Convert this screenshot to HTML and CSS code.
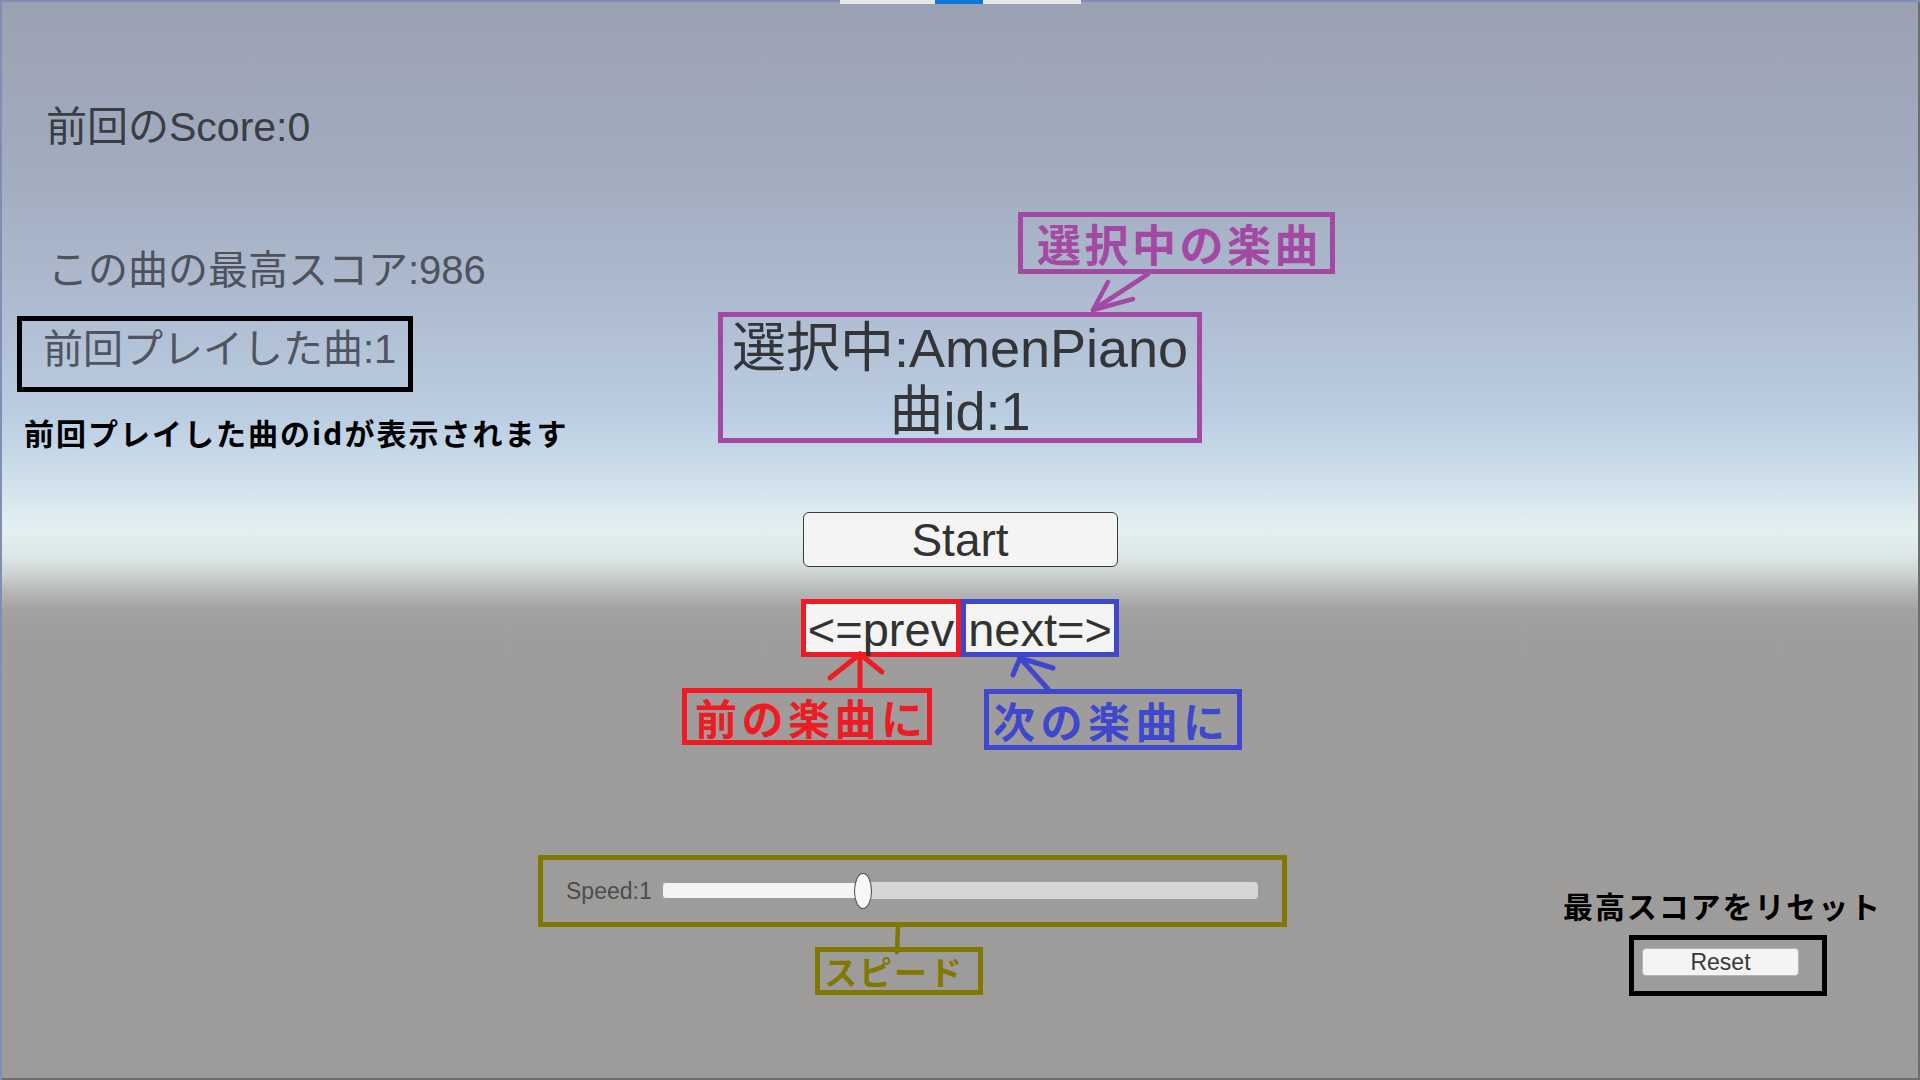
FILE: index.html
```html
<!DOCTYPE html>
<html lang="ja">
<head>
<meta charset="utf-8">
<title>Music Select</title>
<link rel="stylesheet" href="styles.css">
</head>
<body>
<div class="screen">
  <div class="col col-left">
    <p class="ui-text score">前回のScore:0</p>
    <p class="ui-text best">この曲の最高スコア:986</p>
    <div class="mark-black last-box">
      <p class="ui-text last">前回プレイした曲:1</p>
    </div>
    <p class="note hint">前回プレイした曲のidが表示されます</p>
  </div>

  <div class="col col-center">
    <div class="mark-purple selected">
      <p class="sel-line">選択中:AmenPiano</p>
      <p class="sel-line">曲id:1</p>
    </div>
    <button class="btn start">Start</button>
    <div class="nav-row">
      <div class="nav-btn mark-red">&lt;=prev</div>
      <div class="nav-btn mark-blue">next=&gt;</div>
    </div>
    <div class="mark-olive speed-box">
      <span class="speed-label">Speed:1</span>
      <div class="track">
        <div class="fill" style="width:201px"></div>
        <div class="thumb" style="left:192px"></div>
      </div>
    </div>
  </div>

  <div class="col col-right">
    <p class="note reset-note">最高スコアをリセット</p>
    <div class="mark-black reset-box">
      <button class="btn reset">Reset</button>
    </div>
  </div>

  <div class="label label-purple">選択中の楽曲</div>
  <div class="label label-red">前の楽曲に</div>
  <div class="label label-blue">次の楽曲に</div>
  <div class="label label-olive">スピード</div>

  <svg class="arrows" width="1920" height="1080" viewBox="0 0 1920 1080">
    <g fill="none" stroke-linecap="round" stroke-linejoin="round">
      <g stroke="#A349A4" stroke-width="4.5">
        <path d="M1148 274 L1093 310"/>
        <path d="M1093 310 L1108 282"/>
        <path d="M1093 310 L1133 299"/>
      </g>
      <g stroke="#ED1C24" stroke-width="5">
        <path d="M860 690 L860 654"/>
        <path d="M860 654 L830 678"/>
        <path d="M860 654 L882 672"/>
      </g>
      <g stroke="#3F48CC" stroke-width="5">
        <path d="M1048 689 L1020 658"/>
        <path d="M1020 658 L1013 675"/>
        <path d="M1020 658 L1053 668"/>
      </g>
      <g stroke="#807800" stroke-width="4.5">
        <path d="M898 927 L897 952"/>
      </g>
    </g>
  </svg>

  <div class="tabbar"><span class="tab-active"></span></div>
</div>
</body>
</html>
```

FILE: styles.css
```css
* { box-sizing: border-box; }

html, body {
  margin: 0;
  padding: 0;
  width: 1920px;
  height: 1080px;
  overflow: hidden;
}

body {
  font-family: "Liberation Sans", "Noto Sans CJK JP", sans-serif;
}

.screen {
  position: relative;
  width: 1920px;
  height: 1080px;
  display: grid;
  grid-template-columns: 500px 920px 500px;
  background: linear-gradient(to bottom,
    #9aa1b2 0px,
    #a3adc0 180px,
    #adbbd0 300px,
    #bccee2 420px,
    #d2e3ec 490px,
    #e3f0f0 528px,
    #dde9e8 555px,
    #cdd2d2 574px,
    #b6b6b6 592px,
    #a4a2a1 610px,
    #9f9d9c 640px,
    #9e9c9b 1080px);
  box-shadow: inset 2px 2px 0 #7f8fb2, inset -2px -2px 0 #6e6e6e;
}

.col {
  display: flex;
  flex-direction: column;
  align-items: flex-start;
  min-width: 0;
}

p { margin: 0; }

/* ---------- left ---------- */
.col-left { padding-top: 103px; }

.ui-text {
  font-size: 40px;
  line-height: 48px;
  white-space: nowrap;
}

.score {
  padding-left: 46px;
  color: #3a3d44;
  font-size: 41px;
}

.best {
  margin-top: 95px;
  padding-left: 48px;
  color: #4d525d;
}

.mark-black { border: 5px solid #000; }

.last-box {
  margin-top: 22px;
  margin-left: 17px;
  width: 396px;
  height: 76px;
  padding: 4px 0 0 21px;
}

.last { color: #4f5460; }

.note {
  font-family: "Noto Sans CJK JP", sans-serif;
  font-weight: 700;
  color: #000;
  white-space: nowrap;
}

.hint {
  margin-top: 22px;
  padding-left: 24px;
  font-size: 30px;
  line-height: 36px;
  letter-spacing: 2px;
}

/* ---------- center ---------- */
.col-center {
  padding-top: 312px;
  align-items: center;
}

.mark-purple { border: 5px solid #A349A4; }
.mark-red { border: 5px solid #ED1C24; }
.mark-blue { border: 5px solid #3F48CC; }
.mark-olive { border: 5px solid #807800; }

.selected {
  width: 484px;
  height: 131px;
  text-align: center;
}

.sel-line {
  font-size: 54px;
  line-height: 63px;
  color: #333538;
  white-space: nowrap;
}

.btn {
  font-family: "Liberation Sans", sans-serif;
  background: #f4f4f4;
  color: #323232;
  margin: 0;
  cursor: pointer;
}

.start {
  margin-top: 69px;
  width: 315px;
  height: 55px;
  border: 1px solid #3a3a3a;
  border-radius: 6px;
  font-size: 46px;
  line-height: 51px;
  padding: 2px 0 0 0;
  display: block;
}

.nav-row {
  margin-top: 32px;
  display: flex;
}

.nav-btn {
  height: 58px;
  background: #f4f4f4;
  color: #323232;
  font-size: 47px;
  line-height: 46px;
  padding-top: 3px;
  text-align: center;
  white-space: nowrap;
}

.nav-btn.mark-red { width: 160px; }
.nav-btn.mark-blue { width: 158px; }

.speed-box {
  align-self: flex-start;
  margin-top: 198px;
  margin-left: 38px;
  width: 749px;
  height: 72px;
  display: flex;
  align-items: center;
  padding-left: 23px;
}

.speed-label {
  font-size: 23px;
  color: #4c4c4c;
  width: 96px;
  white-space: nowrap;
}

.track {
  position: relative;
  width: 596px;
  height: 17px;
  background: #d6d6d6;
  border-radius: 4px;
  margin-top: -2px;
}

.fill {
  height: 17px;
  background: #f4f4f4;
  border: 1px solid #9a9a9a;
  border-radius: 4px 0 0 4px;
}

.thumb {
  position: absolute;
  top: -9px;
  width: 18px;
  height: 36px;
  border-radius: 50%;
  background: #f7f7f7;
  border: 1px solid #4a4a4a;
}

/* ---------- right ---------- */
.col-right { padding-top: 885px; }

.reset-note {
  margin-left: 143px;
  font-size: 30px;
  line-height: 40px;
  letter-spacing: 1.9px;
}

.reset-box {
  margin-top: 10px;
  margin-left: 209px;
  width: 198px;
  height: 61px;
  padding: 8px 0 0 8px;
}

.reset {
  display: block;
  width: 157px;
  height: 28px;
  border: 1px solid #b5b5b5;
  border-radius: 4px;
  font-size: 23px;
  line-height: 26px;
  padding: 0;
  color: #383838;
}

/* ---------- annotation labels ---------- */
.label {
  position: absolute;
  font-family: "Noto Sans CJK JP", sans-serif;
  font-weight: 700;
  white-space: nowrap;
  display: flex;
  align-items: center;
}

.label-purple {
  left: 1018px; top: 212px; width: 317px; height: 62px;
  border: 5px solid #A349A4;
  color: #A349A4;
  font-size: 44px;
  letter-spacing: 3.5px;
  padding-left: 14px;
}

.label-red {
  left: 682px; top: 688px; width: 250px; height: 57px;
  border: 5px solid #ED1C24;
  color: #ED1C24;
  font-size: 42px;
  letter-spacing: 4.5px;
  padding-left: 8px;
}

.label-blue {
  left: 984px; top: 689px; width: 258px; height: 61px;
  border: 5px solid #3F48CC;
  color: #3F48CC;
  font-size: 42px;
  letter-spacing: 5.5px;
  padding-left: 4px;
}

.label-olive {
  left: 815px; top: 947px; width: 168px; height: 48px;
  border: 5px solid #807800;
  color: #807800;
  font-size: 33px;
  letter-spacing: 2px;
  padding-left: 4px;
}

.arrows {
  position: absolute;
  left: 0;
  top: 0;
  pointer-events: none;
}

.tabbar {
  position: absolute;
  top: 0;
  left: 840px;
  width: 241px;
  height: 4px;
  background: #e8e8e8;
}

.tab-active {
  position: absolute;
  left: 95px;
  top: 0;
  width: 48px;
  height: 4px;
  background: #0a78d7;
}
```
